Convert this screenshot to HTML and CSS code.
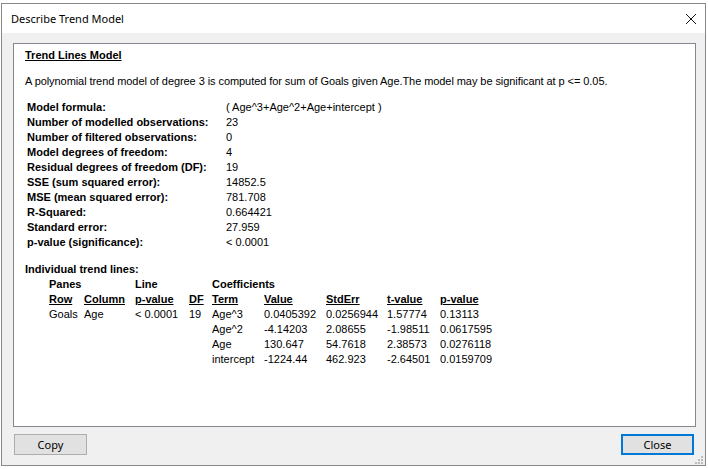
FILE: index.html
```html
<!DOCTYPE html>
<html>
<head>
<meta charset="utf-8">
<link rel="stylesheet" href="styles.css">
</head>
<body>
<div class="window">
  <div class="titlebar">
    <span class="title">Describe Trend Model</span>
    <svg class="close-x" width="12" height="12" viewBox="0 0 12 12"><path d="M1 1 L11 11 M11 1 L1 11" stroke="#111" stroke-width="1" fill="none"/></svg>
  </div>
  <div class="content">
    <div class="panel">
      <div class="heading">Trend Lines Model</div>
      <p class="desc">A polynomial trend model of degree 3 is computed for sum of Goals given Age.The model may be significant at p &lt;= 0.05.</p>
      <div class="stats">
        <div class="lbl">Model formula:</div><div class="val">( Age^3+Age^2+Age+intercept )</div>
        <div class="lbl">Number of modelled observations:</div><div class="val">23</div>
        <div class="lbl">Number of filtered observations:</div><div class="val">0</div>
        <div class="lbl">Model degrees of freedom:</div><div class="val">4</div>
        <div class="lbl">Residual degrees of freedom (DF):</div><div class="val">19</div>
        <div class="lbl">SSE (sum squared error):</div><div class="val">14852.5</div>
        <div class="lbl">MSE (mean squared error):</div><div class="val">781.708</div>
        <div class="lbl">R-Squared:</div><div class="val">0.664421</div>
        <div class="lbl">Standard error:</div><div class="val">27.959</div>
        <div class="lbl">p-value (significance):</div><div class="val">&lt; 0.0001</div>
      </div>
      <div class="sub">Individual trend lines:</div>
      <div class="lines">
        <div class="b span2">Panes</div><div class="b span2">Line</div><div class="b span5">Coefficients</div>
        <div class="bu">Row</div><div class="bu">Column</div><div class="bu">p-value</div><div class="bu">DF</div><div class="bu">Term</div><div class="bu">Value</div><div class="bu">StdErr</div><div class="bu">t-value</div><div class="bu">p-value</div>
        <div>Goals</div><div>Age</div><div>&lt; 0.0001</div><div>19</div><div>Age^3</div><div>0.0405392</div><div>0.0256944</div><div>1.57774</div><div>0.13113</div>
        <div></div><div></div><div></div><div></div><div>Age^2</div><div>-4.14203</div><div>2.08655</div><div>-1.98511</div><div>0.0617595</div>
        <div></div><div></div><div></div><div></div><div>Age</div><div>130.647</div><div>54.7618</div><div>2.38573</div><div>0.0276118</div>
        <div></div><div></div><div></div><div></div><div>intercept</div><div>-1224.44</div><div>462.923</div><div>-2.64501</div><div>0.0159709</div>
      </div>
    </div>
    <div class="footer">
      <button class="btn">Copy</button>
      <button class="btn primary">Close</button>
    </div>
  </div>
  <svg class="grip" width="8" height="8" viewBox="0 0 8 8">
    <rect x="6" y="0" width="2" height="2" fill="#bbb"/>
    <rect x="3" y="3" width="2" height="2" fill="#bbb"/>
    <rect x="6" y="3" width="2" height="2" fill="#bbb"/>
    <rect x="0" y="6" width="2" height="2" fill="#bbb"/>
    <rect x="3" y="6" width="2" height="2" fill="#bbb"/>
    <rect x="6" y="6" width="2" height="2" fill="#bbb"/>
  </svg>
</div>
</body>
</html>
```
FILE: styles.css
```css
html, body { margin: 0; padding: 0; }
body {
  background: #fff;
  width: 708px;
  height: 469px;
  overflow: hidden;
  font-family: "Liberation Sans", Arial, sans-serif;
}
.window {
  position: relative;
  margin: 3px 0 0 1px;
  width: 703px;
  height: 461px;
  border: 1px solid #888;
  display: flex;
  flex-direction: column;
  background: #f0f0f0;
}
.titlebar {
  height: 29px;
  background: #fff;
  display: flex;
  align-items: center;
  justify-content: space-between;
  padding: 0 8px 0 9px;
  flex: none;
}
.title {
  font-family: "Noto Sans", "Liberation Sans", sans-serif;
  font-size: 11px;
  color: #000;
}
.close-x { margin-top: 1px; }
.content {
  flex: 1;
  display: flex;
  flex-direction: column;
  padding: 10px 9px 10px 11px;
  min-height: 0;
}
.panel {
  flex: 1;
  background: #fff;
  border: 1px solid #828790;
  padding: 4px 11px;
  font-size: 11px;
  line-height: 15px;
  color: #000;
}
.heading {
  font-weight: bold;
  text-decoration: underline;
}
.desc { margin: 11px 0; letter-spacing: -0.07px; }
.stats {
  display: grid;
  grid-template-columns: 199px auto;
  padding-left: 2px;
}
.lbl { font-weight: bold; }
.sub {
  font-weight: bold;
  margin-top: 12px;
}
.lines {
  display: grid;
  grid-template-columns: 35px 51px 54px 23px 52px 62px 61px 53px auto;
  padding-left: 24px;
  white-space: nowrap;
}
.b { font-weight: bold; }
.bu { font-weight: bold; text-decoration: underline; }
.span2 { grid-column: span 2; }
.span5 { grid-column: span 5; }
.footer {
  display: flex;
  justify-content: space-between;
  margin-top: 7px;
  padding: 0 2px 0 1px;
  flex: none;
}
.btn {
  width: 73px;
  height: 21px;
  background: #e1e1e1;
  border: 1px solid #adadad;
  font-family: "Noto Sans", "Liberation Sans", sans-serif;
  font-size: 11px;
  color: #000;
  padding: 0;
  margin: 0;
}
.btn.primary { border: 2px solid #0078d7; }
.grip {
  position: absolute;
  right: 2px;
  bottom: 1px;
}
```
